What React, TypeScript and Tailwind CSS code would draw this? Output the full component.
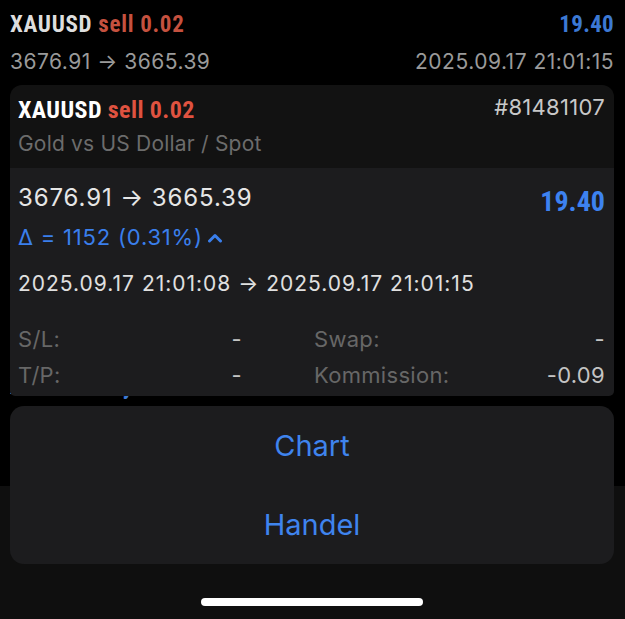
import React from 'react'

const cond = "font-['Roboto_Condensed','Liberation_Sans_Narrow','Arial_Narrow','DejaVu_Sans_Condensed','Roboto',sans-serif] font-stretch-condensed font-bold"

interface RowProps {
  title: string;
  side: string;
  sideColor: string;
  volume: string;
  profit: string;
  profitColor: string;
  prices?: string;
  time?: string;
}

const TradeRow: React.FC<RowProps> = ({ title, side, sideColor, volume, profit, profitColor, prices, time }) => {
  return (
    <div className="h-[91px] pl-[10px] pr-[11px] pt-[10px]">
      <div className="flex items-baseline justify-between leading-[30px]">
        <div className={`${cond} text-[23px] tracking-[0.7px]`}>
          <span className="text-[#dedede]">{title}</span>{' '}
          <span className={sideColor}>{side} {volume}</span>
        </div>
        <span className={`${cond} text-[23px] tracking-[0.3px] ${profitColor}`}>{profit}</span>
      </div>
      {prices && (
        <div className="mt-[7px] flex items-baseline justify-between text-[21px] leading-[30px] tracking-[0.5px] text-[#9a9a9a]">
          <span>{prices}</span>
          <span>{time}</span>
        </div>
      )}
    </div>
  )
}

const Info = ({ label, value }: { label: string; value: string }) => (
  <div className="flex items-baseline justify-between">
    <span className="text-[#676767]">{label}</span>
    <span className="text-[#c4c4c4]">{value}</span>
  </div>
)

export default function App() {
  return (
    <div className="relative h-[619px] w-[625px] overflow-hidden bg-black font-['Inter','Liberation_Sans',sans-serif]">
      {/* list behind the menu */}
      <div className="flex h-full flex-col">
        <div className="h-[486px]">
          <TradeRow
            title="XAUUSD"
            side="sell"
            sideColor="text-[#c5513f]"
            volume="0.02"
            profit="19.40"
            profitColor="text-[#3c79d4]"
            prices="3676.91 → 3665.39"
            time="2025.09.17 21:01:15"
          />
          <div className="h-[271px]" />
          <TradeRow
            title="XAUUSD"
            side="buy"
            sideColor="text-[#3c79d4]"
            volume="0.02"
            profit="-8.20"
            profitColor="text-[#c5513f]"
          />
        </div>
        <div className="flex-1 bg-[#0f0f0f]" />
      </div>

      {/* context menu overlay */}
      <div className="absolute inset-0 flex flex-col pl-[10px] pr-[11px] pt-[85px]">
        <div className="overflow-hidden rounded-t-[12px] rounded-b-[5px]">
          <div className="bg-[#121212] pl-[8px] pr-[9px] pb-[9px] pt-[9px]">
            <div className="flex items-start justify-between">
              <div className={`${cond} text-[24px] leading-[32px] tracking-[0.4px]`}>
                <span className="text-white">XAUUSD</span>{' '}
                <span className="text-[#df5240]">sell 0.02</span>
              </div>
              <span className="text-[22px] leading-[26px] tracking-[0.3px] text-[#c8c8c8]">#81481107</span>
            </div>
            <div className="mt-[3px] text-[21px] leading-[30px] tracking-[0.2px] text-[#6c6c6c]">Gold vs US Dollar / Spot</div>
          </div>
          <div className="bg-[#1c1c1e] pl-[8px] pr-[9px] pb-[3px] pt-[13px]">
            <div className="flex items-start justify-between">
              <span className="text-[24px] leading-[34px] tracking-[0.9px] text-[#e6e6e6]">3676.91 → 3665.39</span>
              <span className={`${cond} pt-[4px] text-[28px] leading-[34px] text-[#3d82f0]`}>19.40</span>
            </div>
            <div className="mt-[3px] flex items-center gap-[4px] text-[22px] leading-[30px] tracking-[0.8px] text-[#3a7fec]">
              <span>Δ = 1152 (0.31%)</span>
              <svg width="16" height="10" viewBox="0 0 16 10" className="mt-[2px]">
                <polyline points="2.5,8 8,2.5 13.5,8" fill="none" stroke="#3a7fec" strokeWidth="3" strokeLinecap="round" strokeLinejoin="round" />
              </svg>
            </div>
            <div className="mt-[17px] text-[21px] leading-[30px] tracking-[1px] text-[#e0e0e0]">
              2025.09.17 21:01:08 → 2025.09.17 21:01:15
            </div>
            <div className="mt-[22px] grid grid-cols-[224px_1fr] gap-x-[72px] text-[22px] leading-[36px] tracking-[0.3px]">
              <Info label="S/L:" value="-" />
              <Info label="Swap:" value="-" />
              <Info label="T/P:" value="-" />
              <Info label="Kommission:" value="-0.09" />
            </div>
          </div>
        </div>

        <div className="mt-[10px] flex flex-col rounded-[14px] bg-[#1c1c1e] text-[29px] leading-[79px] text-[#3f84ee]">
          <button className="h-[79px] text-center">Chart</button>
          <button className="h-[79px] text-center">Handel</button>
        </div>

        <div className="mt-auto mb-[13px] flex justify-center">
          <div className="h-[8px] w-[222px] rounded-full bg-white" />
        </div>
      </div>
    </div>
  )
}
